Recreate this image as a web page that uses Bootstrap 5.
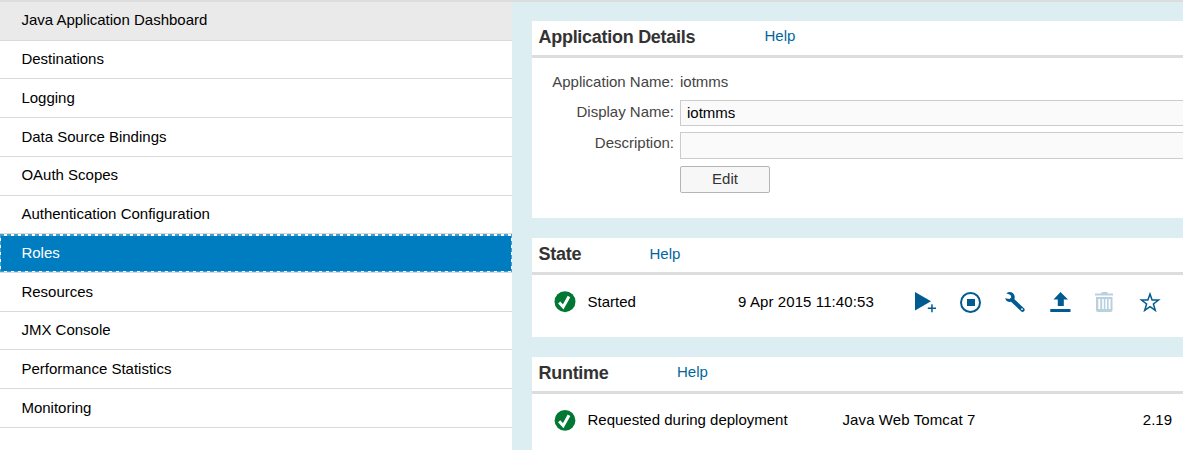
<!DOCTYPE html>
<html lang="en">
<head>
<meta charset="utf-8">
<meta name="viewport" content="width=device-width, initial-scale=1">
<title>Java Application Dashboard</title>
<link href="https://cdn.jsdelivr.net/npm/bootstrap@5.3.0/dist/css/bootstrap.min.css" rel="stylesheet">
<style>
body{font-family:"Liberation Sans",Arial,sans-serif;font-size:15px;line-height:18px;color:#000;background:#dceef1}
.shell{height:450px;border-top:2px solid #ddd}
.side{width:512px;background:#fff}
.side .list-group-item,.side .list-group-item:last-child{height:38.73px;padding:9.5px 21.4px 0;border:0;border-bottom:1px solid #d9d9d9;color:#000;background:#fff}
.side .list-group-item.top-item{background:#eaeaea;padding-top:9px}
.side .list-group-item.active{--h:repeating-linear-gradient(90deg,#3f9fd3 0 4px,#fff 4px 7px);--v:repeating-linear-gradient(180deg,#3f9fd3 0 4px,#fff 4px 7px);color:#fff;margin:0;background:var(--h) top/100% 2px no-repeat,var(--h) bottom/100% 1px no-repeat,var(--v) left/1px 100% no-repeat,var(--v) right/1px 100% no-repeat,#007cc0}
.main-col{padding:19px 0 0 20px;gap:20px}
.panel{background:#fff;flex:none}
.panel-head{height:37px;border-bottom:3px solid #ddd;padding:6px 0 0 6.5px}
.panel-head h2{font-size:18px;line-height:20px;font-weight:700;letter-spacing:-.28px;color:#333;margin:0}
.panel-head a{color:#00679e;text-decoration:none}
.details{height:197px}.state{height:99px}.runtime{height:120px}
.state .panel-head a{padding-top:1px}
.form-lines{color:#444;padding-top:15px}
.lbl{width:142px;text-align:right}
.field{height:26px;border:1px solid #ccc;border-right:0;border-radius:0;background:#fafafa;padding:0 6px 2px;font-size:15px;line-height:22px;color:#000;box-shadow:none}
.btn-edit{width:90px;height:27px;padding:0 0 1px;border:1px solid #b5b5b5;border-radius:2px;background:#f7f7f7;font-size:15px;line-height:24px;color:#333}
.line-row{height:22px;padding-left:22px}
.line-row>span{flex:none}
.stamp{width:176px;letter-spacing:.1px}
svg{display:block;flex:none}
</style>
</head>
<body class="overflow-hidden">
<div class="shell d-flex">
<nav class="side flex-shrink-0">
<div class="list-group list-group-flush">
<a href="#" class="list-group-item top-item">Java Application Dashboard</a>
<a href="#" class="list-group-item">Destinations</a>
<a href="#" class="list-group-item">Logging</a>
<a href="#" class="list-group-item">Data Source Bindings</a>
<a href="#" class="list-group-item">OAuth Scopes</a>
<a href="#" class="list-group-item">Authentication Configuration</a>
<a href="#" class="list-group-item active">Roles</a>
<a href="#" class="list-group-item">Resources</a>
<a href="#" class="list-group-item">JMX Console</a>
<a href="#" class="list-group-item">Performance Statistics</a>
<a href="#" class="list-group-item">Monitoring</a>
</div>
</nav>
<main class="main-col flex-grow-1 d-flex flex-column overflow-hidden">
<section class="panel details">
<div class="panel-head d-flex"><h2 style="width:226px">Application Details</h2><a href="#">Help</a></div>
<div class="form-lines">
<div class="d-flex" style="height:27px"><span class="lbl">Application Name:</span><span class="ms-auto flex-grow-1" style="padding-left:6px">iotmms</span></div>
<div class="d-flex" style="height:32px"><label class="lbl" style="padding-top:3px" for="dn">Display Name:</label><input id="dn" class="form-control field flex-grow-1 w-auto" style="margin-left:6px" value="iotmms"></div>
<div class="d-flex" style="height:34px"><label class="lbl" style="padding-top:2px" for="ds">Description:</label><input id="ds" class="form-control field flex-grow-1 w-auto" style="margin-left:6px;height:27px"></div>
<div style="padding-left:148px"><button class="btn btn-edit">Edit</button></div>
</div>
</section>
<section class="panel state">
<div class="panel-head d-flex"><h2 style="width:111px">State</h2><a href="#">Help</a></div>
<div class="line-row d-flex align-items-center" style="margin-top:16px">
<svg width="22" height="22" viewBox="0 0 22 22"><circle cx="11" cy="10.7" r="10.5" fill="#007833"/><path d="M5.2 11.5l4 4.5L15 5.5" fill="none" stroke="#fff" stroke-width="3"/></svg>
<span style="width:162px;padding-left:11.5px">Started</span><span class="stamp">9 Apr 2015 11:40:53</span>
<svg width="269" height="26" viewBox="914 289 269 26">
<g fill="#005b91">
<path d="M915 292v18.5l16-9.3z"/><path d="M927.8 307.5h8.2v1.5h-8.2zM931.2 304.2h1.5v8h-1.5z"/>
<circle cx="970.5" cy="302.5" r="9.5" fill="none" stroke="#005b91" stroke-width="2"/><path d="M967 299h8v7h-8z"/>
<path d="M1006.3 293.2Q1010 291 1013 293.2Q1015.8 296 1014.2 299.6Q1012 302.6 1008.5 301.8Q1006 301 1005 298.2L1009.6 299L1011.3 297.3L1010.5 295z"/>
<path d="M1012.7 300.5l9.8 9.2" fill="none" stroke="#005b91" stroke-width="4.2" stroke-linecap="round"/>
<circle cx="1022" cy="309.2" r=".9" fill="#fff"/>
<path d="M1060.5 292l7.5 7.5h-4.2v6.5h-6v-6.5h-4.3zM1050.3 309h20.2v3h-20.2z"/>
</g>
<g fill="#b9d1df"><path d="M1095 293.5h6l1-1.5h5l1 1.5h5v2h-18zM1096 297h16.5v13q0 2-2 2h-12.5q-2 0-2-2z"/><path d="M1098.3 299h2v10h-2zM1102.2 299h1.6v10h-1.6zM1105.4 299h1.6v10h-1.6zM1108.7 299h1.8v10h-1.8z" fill="#fff"/></g>
<path d="M1150 294l2.1 6.1h6.4l-5.1 3.9 1.9 6.4-5.3-3.8-5.3 3.8 1.9-6.4-5.1-3.9h6.4z" fill="none" stroke="#005b91" stroke-width="1.5"/>
</svg>
</div>
</section>
<section class="panel runtime">
<div class="panel-head d-flex"><h2 style="width:138.5px">Runtime</h2><a href="#">Help</a></div>
<div class="line-row d-flex align-items-center" style="margin-top:15px">
<svg width="22" height="22" viewBox="0 0 22 22"><circle cx="11" cy="11.4" r="10.4" fill="#007833"/><path d="M5.2 12.2l4 4.5L15 6.2" fill="none" stroke="#fff" stroke-width="3"/></svg>
<span style="width:266.5px;padding-left:11.5px">Requested during deployment</span><span style="letter-spacing:.1px">Java Web Tomcat 7</span><span class="ms-auto" style="padding-right:11px">2.19</span>
</div>
</section>
</main>
</div>
<script src="https://cdn.jsdelivr.net/npm/bootstrap@5.3.0/dist/js/bootstrap.bundle.min.js"></script>
</body>
</html>
